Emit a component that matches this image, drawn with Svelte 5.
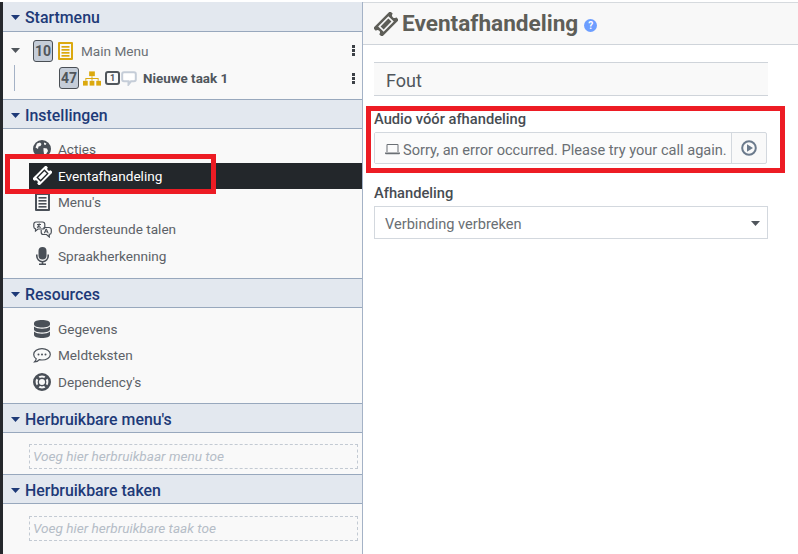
<script>
	const settings = [
		{ label: 'Acties', icon: 'globe' },
		{ label: 'Eventafhandeling', icon: 'ticket', active: true },
		{ label: "Menu's", icon: 'list' },
		{ label: 'Ondersteunde talen', icon: 'lang' },
		{ label: 'Spraakherkenning', icon: 'mic' }
	];
	const resources = [
		{ label: 'Gegevens', icon: 'db' },
		{ label: 'Meldteksten', icon: 'chat' },
		{ label: "Dependency's", icon: 'ring' }
	];
</script>

{#snippet caret()}
	<svg class="caret" viewBox="0 0 9 5" width="9" height="5"><path d="M0 0h9L4.5 5z" /></svg>
{/snippet}

{#snippet dots()}
	<svg class="dots" viewBox="0 0 3 11" width="3" height="11">
		<rect width="3" height="3" /><rect y="4" width="3" height="3" /><rect y="8" width="3" height="3" />
	</svg>
{/snippet}

{#snippet ticket(size)}
	<svg viewBox="0 0 20 20" width={size} height={size}>
		<g transform="rotate(-45 10 10)">
			<path fill-rule="evenodd" d="M0 4.800h20v3.200a2 2 0 0 0 0 4v3.200H0V12a2 2 0 0 0 0-4zM4 6.800v6.400h12V6.800zM5.400 8.200h9.200v3.600H5.400z" />
		</g>
	</svg>
{/snippet}

{#snippet icon(name)}
	{#if name === 'globe'}
		<svg viewBox="0 0 18 18" width="18" height="18">
			<circle cx="9" cy="9" r="9" />
			<path class="cut" d="M4 3.500l3-1 1.500 1.500-1 2-2 .5-.5 2.500-2.500-1.500zM10.500 8l3.500.5 1 2.500-2.500 4-1.500-1-.5-3.500zM11 2.500l2.500 1-1 1.500-1.500-.5z" />
		</svg>
	{:else if name === 'ticket'}
		{@render ticket(19)}
	{:else if name === 'list'}
		<svg viewBox="0 0 15 18" width="15" height="18">
			<path fill-rule="evenodd" d="M1 0h13a1 1 0 0 1 1 1v16a1 1 0 0 1-1 1H1a1 1 0 0 1-1-1V1a1 1 0 0 1 1-1zM2 2v14h11V2z" />
			<rect x="3.500" y="4" width="8" height="1.600" /><rect x="3.500" y="7" width="8" height="1.600" />
			<rect x="3.500" y="10" width="8" height="1.600" /><rect x="3.500" y="13" width="8" height="1.600" />
		</svg>
	{:else if name === 'lang'}
		<svg viewBox="0 0 19 17" width="19" height="17">
			<path class="line" d="M3 1h6.500a2.300 2.300 0 0 1 2.300 2.300v2.400A2.300 2.300 0 0 1 9.500 8H5L2.500 10V7.800A2.300 2.300 0 0 1 .8 5.700V3.300A2.300 2.300 0 0 1 3 1z" />
			<path class="line" d="M10.500 6.500h5.500a2.300 2.300 0 0 1 2.300 2.300v2.400a2.300 2.300 0 0 1-2 2.200V16l-2.800-2.500h-3a2.300 2.300 0 0 1-2.300-2.300V9" />
			<path class="line" d="M4 3.500h4M6.300 2.500c0 2-1 3.500-2.300 4M5 4.500c.6 1 1.500 1.600 2.800 2" />
			<path d="M12.600 7.800h1.200l1.900 4.500h-1.100l-.4-1h-1.900l-.4 1h-1.100zM12.600 10.400h1.100l-.5-1.400z" />
		</svg>
	{:else if name === 'mic'}
		<svg viewBox="0 0 13 18" width="13" height="18">
			<rect x="2.500" width="8" height="12.500" rx="4" />
			<path class="line wide" d="M.8 7.500V9a5.700 5.700 0 0 0 11.400 0V7.500M6.500 14.700V17M3 17.300h7" />
		</svg>
	{:else if name === 'db'}
		<svg viewBox="0 0 16 18" width="16" height="18">
			<path d="M8 0c4.400 0 8 1.300 8 3v1.500c0 1.700-3.600 3-8 3s-8-1.300-8-3V3c0-1.700 3.600-3 8-3z" />
			<path d="M0 6.500c1.700 1.500 4.800 2.200 8 2.200s6.300-.7 8-2.200V9.500c0 1.700-3.600 3-8 3s-8-1.300-8-3z" />
			<path d="M0 11.500c1.700 1.500 4.800 2.200 8 2.200s6.300-.7 8-2.200V15c0 1.700-3.600 3-8 3s-8-1.300-8-3z" />
		</svg>
	{:else if name === 'chat'}
		<svg viewBox="0 0 18 15" width="18" height="15">
			<path class="line" d="M9 .7c4.500 0 8.300 2.500 8.300 5.700S13.500 12 9 12c-1 0-1.900-.1-2.700-.3C5.300 13 3.500 14 1.500 14c1-.9 1.600-2 1.700-3.300C1.700 9.700.7 8.100.7 6.400.7 3.200 4.500.7 9 .7z" />
			<circle cx="5.500" cy="6.400" r="1" /><circle cx="9" cy="6.400" r="1" /><circle cx="12.500" cy="6.400" r="1" />
		</svg>
	{:else if name === 'ring'}
		<svg viewBox="0 0 18 18" width="18" height="18">
			<circle class="line thick" cx="9" cy="9" r="7.700" />
			<circle class="line thin" cx="9" cy="9" r="3.700" />
			<path class="line thick" d="M3.500 3.500l3 3M14.500 3.500l-3 3M3.500 14.500l3-3M14.500 14.500l-3-3" />
		</svg>
	{/if}
{/snippet}

<div class="page">
	<aside class="sidebar">
		<h2 class="section-title">{@render caret()}Startmenu</h2>
		<div class="tree">
			<div class="tree-row">
				<span class="tree-caret">{@render caret()}</span>
				<span class="badge">10</span>
				<svg class="gold" viewBox="0 0 15 18" width="15" height="18">
					<path fill-rule="evenodd" d="M1 0h13a1 1 0 0 1 1 1v16a1 1 0 0 1-1 1H1a1 1 0 0 1-1-1V1a1 1 0 0 1 1-1zM2 2v14h11V2z" />
					<rect x="3.500" y="4" width="8" height="1.700" /><rect x="3.500" y="7" width="8" height="1.700" />
					<rect x="3.500" y="10" width="8" height="1.700" /><rect x="3.500" y="13" width="8" height="1.700" />
				</svg>
				<span class="tree-label">Main Menu</span>
				{@render dots()}
			</div>
			<div class="tree-row child">
				<span class="badge">47</span>
				<svg class="gold" viewBox="0 0 19 15" width="18" height="15">
					<rect x="6.500" width="6" height="5" /><rect y="10" width="5" height="5" />
					<rect x="7" y="10" width="5" height="5" /><rect x="14" y="10" width="5" height="5" />
					<path d="M9 5h1v2h6.500v3h-1V8H10v2H9V8H3.500v2h-1V7H9z" />
				</svg>
				<span class="count">1</span>
				<svg class="bubble" viewBox="0 0 16 15" width="16" height="15">
					<path d="M3 1.200h10A1.800 1.800 0 0 1 14.800 3v5.500A1.800 1.800 0 0 1 13 10.300h-3L7.500 13.500v-3.200H3a1.800 1.800 0 0 1-1.800-1.800V3A1.800 1.800 0 0 1 3 1.200z" />
				</svg>
				<strong class="tree-label">Nieuwe taak 1</strong>
				{@render dots()}
			</div>
		</div>

		<h2 class="section-title">{@render caret()}Instellingen</h2>
		<ul class="nav first">
			{#each settings as item}
				<li class:active={item.active}>
					<span class="nav-icon">{@render icon(item.icon)}</span>{item.label}
				</li>
			{/each}
		</ul>

		<h2 class="section-title">{@render caret()}Resources</h2>
		<ul class="nav">
			{#each resources as item}
				<li><span class="nav-icon">{@render icon(item.icon)}</span>{item.label}</li>
			{/each}
		</ul>

		<h2 class="section-title">{@render caret()}Herbruikbare menu's</h2>
		<div class="drop-wrap"><div class="drop">Voeg hier herbruikbaar menu toe</div></div>

		<h2 class="section-title">{@render caret()}Herbruikbare taken</h2>
		<div class="drop-wrap last"><div class="drop">Voeg hier herbruikbare taak toe</div></div>
	</aside>

	<main class="content">
		<header class="content-head">
			<span class="head-icon">{@render ticket(24)}</span>
			<h1>Eventafhandeling</h1>
			<span class="help">?</span>
		</header>
		<div class="form">
			<div class="panel-title">Fout</div>
			<label class="audio-label" for="audio">Audio vóór afhandeling</label>
			<div class="input-group" id="audio">
				<div class="input-text">
					<svg viewBox="0 0 15 11" width="15" height="11">
						<path fill-rule="evenodd" d="M2.500 0h10a1 1 0 0 1 1 1v7h-1V1h-10v7h-1V1a1 1 0 0 1 1-1z" />
						<path d="M0 8.500h15v.7a1 1 0 0 1-1 1H1a1 1 0 0 1-1-1z" />
					</svg>
					Sorry, an error occurred. Please try your call again.
				</div>
				<div class="input-btn">
					<svg viewBox="0 0 16 16" width="16" height="16">
						<circle cx="8" cy="8" r="6.800" fill="none" stroke="#6b7a8c" stroke-width="2" />
						<path d="M6 4.300L12 8 6 11.700z" fill="#6b7a8c" />
					</svg>
				</div>
			</div>
			<label class="select-label" for="handling">Afhandeling</label>
			<div class="select" id="handling">Verbinding verbreken{@render caret()}</div>
		</div>
	</main>

	<div class="mark mark-nav"></div>
	<div class="mark mark-audio"></div>
</div>

<style>
	:global(body) {
		margin: 0;
		background: #fff;
		font-family: Roboto, "Liberation Sans", sans-serif;
		font-size: 13.600px;
		color: #50565c;
	}
	.page {
		position: relative;
		display: flex;
		width: 798px;
		height: 554px;
		overflow: hidden;
		box-sizing: border-box;
		padding-top: 2px;
		background: #fff;
	}
	.sidebar {
		width: 360px;
		margin-left: 3px;
		flex: none;
		box-sizing: border-box;
		background: #f9f9f9;
		border-right: 1px solid #a4b2c6;
		box-shadow: -3px 0 0 #25282c;
	}
	.section-title {
		display: flex;
		align-items: center;
		box-sizing: border-box;
		height: 30px;
		margin: 0;
		padding: 2px 0 0 8px;
		background: #e3e8ef;
		border-bottom: 1px solid #98a8bd;
		color: #1e3a78;
		font-size: 15.900px;
		font-weight: 500;
	}
	.section-title:not(:first-child) {
		border-top: 1px solid #98a8bd;
	}
	.caret {
		fill: currentColor;
		flex: none;
		margin-right: 5px;
	}
	.tree {
		position: relative;
		height: 67px;
		box-sizing: border-box;
		padding-top: 5px;
	}
	.tree::before {
		content: "";
		position: absolute;
		left: 11px;
		top: 33px;
		height: 26px;
		border-left: 1px solid #a4b2c6;
	}
	.tree-row {
		display: flex;
		align-items: center;
		height: 27px;
		padding-right: 7px;
	}
	.tree-caret {
		display: flex;
		width: 30px;
		padding-left: 8px;
		box-sizing: border-box;
		color: #50565c;
	}
	.child {
		height: 28px;
		padding-left: 56px;
	}
	.badge {
		display: flex;
		align-items: center;
		justify-content: center;
		box-sizing: border-box;
		width: 20px;
		height: 22px;
		margin-right: 5px;
		background: #c5cdd8;
		border: 1px solid #4a4f55;
		border-radius: 3px;
		font-weight: 700;
		font-size: 14px;
		color: #50565c;
	}
	.child .badge {
		margin-right: 4px;
	}
	.gold {
		fill: #dba90f;
		flex: none;
	}
	.child .gold {
		margin-right: 4px;
	}
	.count {
		display: flex;
		align-items: center;
		justify-content: center;
		box-sizing: border-box;
		width: 15px;
		height: 14px;
		margin-right: 1px;
		border: 2px solid #50565c;
		border-radius: 3px;
		font-size: 9px;
		font-weight: 700;
	}
	.bubble {
		flex: none;
		fill: #fff;
		stroke: #c5cdd8;
		stroke-width: 2;
	}
	.tree-label {
		flex: 1;
		margin-left: 8px;
		color: #6b7075;
	}
	.child .tree-label {
		margin-left: 6px;
		color: #50565c;
		font-weight: 700;
		font-size: 13.400px;
	}
	.dots {
		fill: #3c4046;
		flex: none;
	}
	.nav {
		list-style: none;
		margin: 0;
		padding: 7px 0 8px 26px;
	}
	.nav.first {
		padding-bottom: 9.400px;
	}
	.nav li {
		display: flex;
		align-items: center;
		height: 26.600px;
		padding-left: 3px;
		color: #5c6167;
		fill: #4a5058;
	}
	.nav li.active {
		background: #23272b;
		color: #fff;
		fill: #fff;
	}
	.nav-icon {
		display: flex;
		justify-content: center;
		align-items: center;
		width: 20px;
		margin-right: 6px;
		flex: none;
	}
	.cut {
		fill: #f9f9f9;
	}
	.line {
		fill: none;
		stroke: #4a5058;
		stroke-width: 1.200;
	}
	.line.wide {
		stroke-width: 1.600;
	}
	.line.thick {
		stroke-width: 2.600;
	}
	.line.thin {
		stroke-width: 1.400;
	}
	.drop-wrap {
		height: 41px;
		box-sizing: border-box;
		padding: 11px 4px 0 26px;
	}
	.drop-wrap.last {
		padding-top: 12px;
	}
	.drop {
		box-sizing: border-box;
		height: 25px;
		line-height: 23px;
		padding-left: 3px;
		border: 1px dashed #c3cad3;
		font-style: italic;
		color: #b5bdc7;
	}
	.content {
		flex: 1;
		min-width: 0;
	}
	.content-head {
		display: flex;
		align-items: center;
		box-sizing: border-box;
		height: 43px;
		padding-left: 11px;
		background: #f8f8f8;
		border-bottom: 1px solid #cfd4da;
		border-top: 1px solid #d6dade;
	}
	.head-icon {
		display: flex;
		fill: #5e5e58;
		margin-right: 4px;
	}
	h1 {
		margin: 0;
		font-size: 22.600px;
		font-weight: 700;
		color: #5e5e58;
	}
	.help {
		display: flex;
		align-items: center;
		justify-content: center;
		width: 13px;
		height: 13px;
		margin: 4px 0 0 6px;
		border-radius: 50%;
		background: #6d9eff;
		color: #fff;
		font-size: 10px;
		font-weight: 700;
	}
	.form {
		width: 394px;
		margin-left: 11px;
		padding-top: 17px;
	}
	.panel-title {
		box-sizing: border-box;
		height: 34px;
		line-height: 35px;
		padding-left: 12px;
		background: #f9f9f9;
		border-top: 1px solid #cfd4da;
		border-bottom: 1px solid #cfd4da;
		font-size: 18px;
		color: #50565c;
	}
	label {
		display: block;
		font-weight: 500;
		font-size: 14.700px;
		line-height: 16px;
		color: #474c52;
	}
	.audio-label {
		margin-top: 15px;
		height: 21px;
	}
	.input-group {
		display: flex;
		box-sizing: border-box;
		width: 393px;
		height: 32px;
		border: 1px solid #d3d8de;
		border-radius: 2px;
		background: #f9f9f9;
	}
	.input-text {
		flex: 1;
		display: flex;
		align-items: center;
		gap: 3px;
		padding: 3px 0 0 10px;
		background: #fbfbfb;
		color: #6a6f74;
		font-size: 14.600px;
		white-space: nowrap;
		fill: #6a6f74;
	}
	.input-btn {
		display: flex;
		align-items: center;
		justify-content: center;
		width: 34px;
		border-left: 1px solid #d3d8de;
	}
	.select-label {
		margin-top: 21px;
		height: 21px;
	}
	.select {
		display: flex;
		align-items: center;
		justify-content: space-between;
		box-sizing: border-box;
		height: 33px;
		padding: 2px 0 0 10px;
		border: 1px solid #d3d8de;
		color: #6a6f74;
		font-size: 14.600px;
	}
	.select .caret {
		color: #50565c;
		margin-right: 7px;
	}
	.mark {
		position: absolute;
		box-sizing: border-box;
		border: 5px solid #ed1c24;
		pointer-events: none;
	}
	.mark-nav {
		left: 5px;
		top: 154px;
		width: 211px;
		height: 40px;
	}
	.mark-audio {
		left: 366px;
		top: 106px;
		width: 419px;
		height: 67px;
	}
</style>
